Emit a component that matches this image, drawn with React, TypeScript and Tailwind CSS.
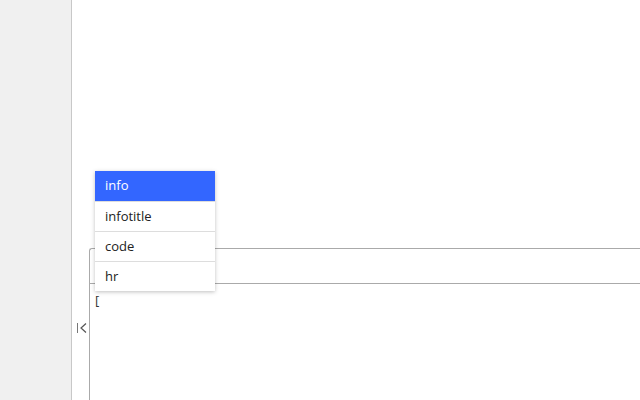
import React from "react";

export default function App() {
  const items = ["info", "infotitle", "code", "hr"];
  return (
    <div className="flex h-[400px] w-[640px] overflow-hidden bg-white" style={{ fontFamily: '"Open Sans", "Noto Sans", sans-serif' }}>
      <div className="h-full w-[72px] shrink-0 border-r border-[#c8c8c8] bg-[#f0f0f0]" />
      <div className="relative flex h-full flex-1 flex-col">
        <div className="h-[248px] shrink-0" />
        <div className="flex flex-1">
          <div className="flex w-[17px] shrink-0 flex-col items-center pt-[74px]">
            <svg width="12" height="12" viewBox="0 0 12 12" className="ml-[2px]">
              <path d="M1.5 1 V11" stroke="#777" strokeWidth="1" fill="none" />
              <path d="M10 1.5 L5 6 L10 10.5" stroke="#555" strokeWidth="1.2" fill="none" />
            </svg>
          </div>
          <div className="flex flex-1 flex-col rounded-tl-[3px] border-l border-t border-[#aaaaaa]">
            <div className="h-[35px] border-b border-[#aaaaaa]" />
            <div className="pl-[5px] pt-[8px] text-[13px] leading-[16px] text-[#333]">[</div>
          </div>
        </div>
        <div className="absolute left-[23px] top-[171px] w-[120px] bg-white text-[13px] text-[#222] shadow-[0_1px_4px_rgba(0,0,0,0.25)]">
          {items.map((it, i) => (
            <div
              key={it}
              className={
                i === 0
                  ? "flex h-[30px] items-center bg-[#3366ff] pl-[10px] text-white"
                  : "flex h-[30px] items-center border-t border-[#dddddd] pl-[10px]"
              }
            >
              {it}
            </div>
          ))}
        </div>
      </div>
    </div>
  );
}
